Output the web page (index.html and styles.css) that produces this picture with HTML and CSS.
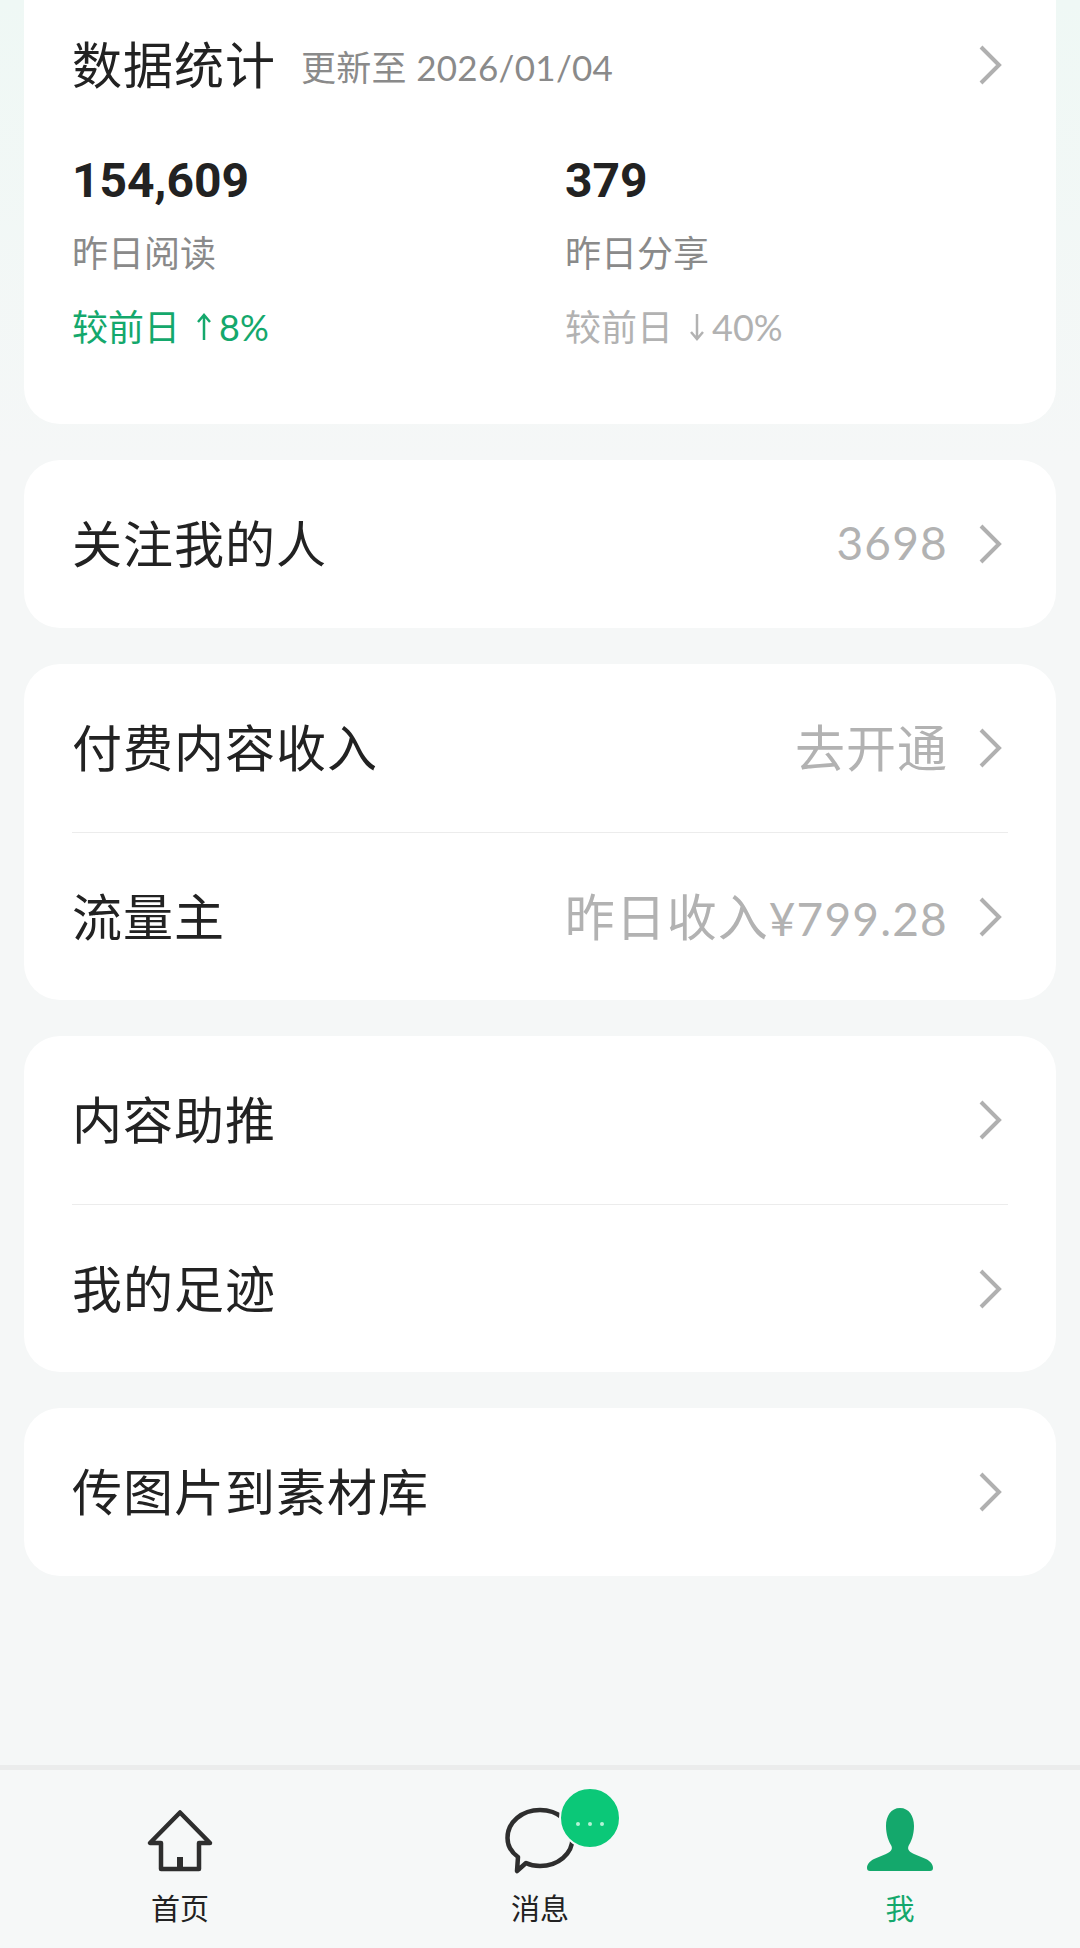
FILE: index.html
```html
<!DOCTYPE html>
<html lang="zh-CN">
<head>
  <meta charset="UTF-8"/>
  <meta name="viewport" content="width=device-width,initial-scale=1"/>
  <title>我</title>
  <link rel="stylesheet" href="styles.css">
</head>
<body>
  <main class="content">
    <!-- Stats -->
    <section class="card stats-card">
      <div class="stats-head">
        <h2 class="stats-title">数据统计</h2>
        <span class="stats-date">更新至 2026/01/04</span>
        <svg class="chevron" viewBox="0 0 24 40"><path d="M3 2l18 18L3 38"/></svg>
      </div>
      <div class="stats-grid">
        <div class="stat">
          <div class="stat-value">154,609</div>
          <div class="stat-label">昨日阅读</div>
          <div class="stat-change up">较前日
            <svg class="trend" viewBox="0 0 16 28"><path d="M8 27V2M2 9l6-7 6 7"/></svg><span>8%</span>
          </div>
        </div>
        <div class="stat">
          <div class="stat-value">379</div>
          <div class="stat-label">昨日分享</div>
          <div class="stat-change">较前日
            <svg class="trend" viewBox="0 0 16 28"><path d="M8 1v25M2 19l6 7 6-7"/></svg><span>40%</span>
          </div>
        </div>
      </div>
    </section>

    <section class="card">
      <div class="row">
        <span class="row-title">关注我的人</span>
        <span class="row-value"><span class="row-num">3698</span></span>
        <svg class="chevron" viewBox="0 0 24 40"><path d="M3 2l18 18L3 38"/></svg>
      </div>
    </section>

    <section class="card">
      <div class="row">
        <span class="row-title">付费内容收入</span>
        <span class="row-value">去开通</span>
        <svg class="chevron" viewBox="0 0 24 40"><path d="M3 2l18 18L3 38"/></svg>
      </div>
      <div class="row">
        <span class="row-title">流量主</span>
        <span class="row-value">昨日收入<span class="row-num">¥799.28</span></span>
        <svg class="chevron" viewBox="0 0 24 40"><path d="M3 2l18 18L3 38"/></svg>
      </div>
    </section>

    <section class="card">
      <div class="row">
        <span class="row-title">内容助推</span>
        <svg class="chevron" viewBox="0 0 24 40"><path d="M3 2l18 18L3 38"/></svg>
      </div>
      <div class="row">
        <span class="row-title">我的足迹</span>
        <svg class="chevron" viewBox="0 0 24 40"><path d="M3 2l18 18L3 38"/></svg>
      </div>
    </section>

    <section class="card">
      <div class="row">
        <span class="row-title">传图片到素材库</span>
        <svg class="chevron" viewBox="0 0 24 40"><path d="M3 2l18 18L3 38"/></svg>
      </div>
    </section>
  </main>

  <!-- Tab bar -->
  <nav class="tabbar">
    <div class="tab">
      <svg class="tab-icon" viewBox="0 0 72 72">
        <path class="line" d="M36 7.5L6 38H17V64H55V38H66Z"/>
        <rect class="door" x="33" y="52" width="6" height="12"/>
      </svg>
      <span class="tab-label">首页</span>
    </div>
    <div class="tab">
      <div class="tab-icon-wrap">
        <svg class="tab-icon" viewBox="0 0 72 72">
          <path class="line" d="M13 66L14 52C7 47 3.5 41 3.5 33C3.5 17 18 5 36 5C54 5 68.5 17 68.5 33C68.5 49 54 61 36 61C30 61 26 60 22 58Z"/>
        </svg>
        <div class="badge"><i></i><i></i><i></i></div>
      </div>
      <span class="tab-label">消息</span>
    </div>
    <div class="tab active">
      <svg class="tab-icon" viewBox="0 0 72 72">
        <path class="solid" d="M36 3C45 3 50 11 50 21C50 30 47 37 44.5 41C43 45 46 47 50 49L62 54C66 56 69 59 69 63C69 65 68 66 66 66H6C4 66 3 65 3 63C3 59 6 56 10 54L22 49C26 47 29 45 27.5 41C25 37 22 30 22 21C22 11 27 3 36 3Z"/>
      </svg>
      <span class="tab-label">我</span>
    </div>
  </nav>
</body>
</html>
```

FILE: styles.css
```css
:root {
  --page-bg: #f5f7f7;
  --text-color: #222;
  --muted: #8a8a8a;
  --light: #b2b2b2;
  --green: #14a86c;
  --font-family: 'Lato', 'Noto Sans CJK SC', sans-serif;
}
* { margin:0; padding:0; box-sizing:border-box }
html, body { width:100%; height:100% }
body {
  display:flex; flex-direction:column;
  height:1948px; overflow:hidden;
  background: linear-gradient(#eff8f5, var(--page-bg) 460px);
  font-family: var(--font-family);
  color: var(--text-color);
}

.content {
  flex:1;
  display:flex; flex-direction:column; gap:36px;
  padding:0 24px;
}
.card {
  background:#fff;
  border-radius:36px;
  padding:0 48px;
}

/* Stats */
.stats-card {
  height:424px;
  border-radius:0 0 36px 36px;
  padding-top:31px;
}
.stats-head { display:flex; align-items:center; height:68px }
.stats-title { font-size:50px; font-weight:400; letter-spacing:1px; line-height:68px }
.stats-date {
  flex:1;
  margin-left:25px;
  font-size:35px; color: var(--muted);
  letter-spacing:0.3px;
}
.stats-grid {
  display:grid; grid-template-columns:493px 1fr;
  margin-top:52px;
}
.stat-value { font-family:'Roboto',sans-serif; font-size:48px; font-weight:700; line-height:60px }
.stat-label { font-size:36px; color: var(--muted); line-height:50px; margin-top:17px }
.stat-change {
  display:flex; align-items:center;
  font-size:36px; line-height:50px; margin-top:24px;
  color: var(--light);
}
.stat-change.up { color: var(--green) }
.trend {
  width:16px; height:28px; margin:0 7px 0 16px;
  fill:none; stroke:currentColor; stroke-width:2.5;
}

.chevron {
  width:24px; height:40px; margin-right:6px; flex:none;
  fill:none; stroke:#b0b0b0; stroke-width:4;
}

/* Rows */
.row { display:flex; align-items:center; height:168px }
.row + .row { border-top:1px solid #ececec }
.row-title { flex:1; font-size:50px; letter-spacing:1px; padding-bottom:6px }
.row-value { font-size:50px; color: var(--light); margin-right:30px; letter-spacing:1px; padding-bottom:6px }
.row-num { font-size:46px; letter-spacing:1.2px }

/* Tab bar */
.tabbar {
  display:grid; grid-template-columns:repeat(3, 1fr);
  height:183px;
  padding-top:35px;
  border-top:5px solid #ebecec;
  background:#f6f8f8;
}
.tab { display:flex; flex-direction:column; align-items:center }
.tab-icon { display:block; width:72px; height:72px }
.tab-icon .line { fill:none; stroke:#2e2e2e; stroke-width:4.5; stroke-linejoin:round }
.tab-icon .door { fill:#2e2e2e }
.tab-icon .solid { fill: var(--green) }
.tab-label { font-size:29px; line-height:40px; margin-top:12px }
.tab.active .tab-label { color: var(--green) }
.tab-icon-wrap { position:relative; width:72px; height:72px }

.badge {
  position:absolute; left:55px; top:-18px;
  width:62px; height:62px;
  border:2px solid #f6f8f8;
  border-radius:50%;
  background:#0bc878;
  display:flex; justify-content:center; gap:8px;
  padding-top:33px;
}
.badge i { width:4px; height:4px; border-radius:50%; background:#b5f3d6 }
```
